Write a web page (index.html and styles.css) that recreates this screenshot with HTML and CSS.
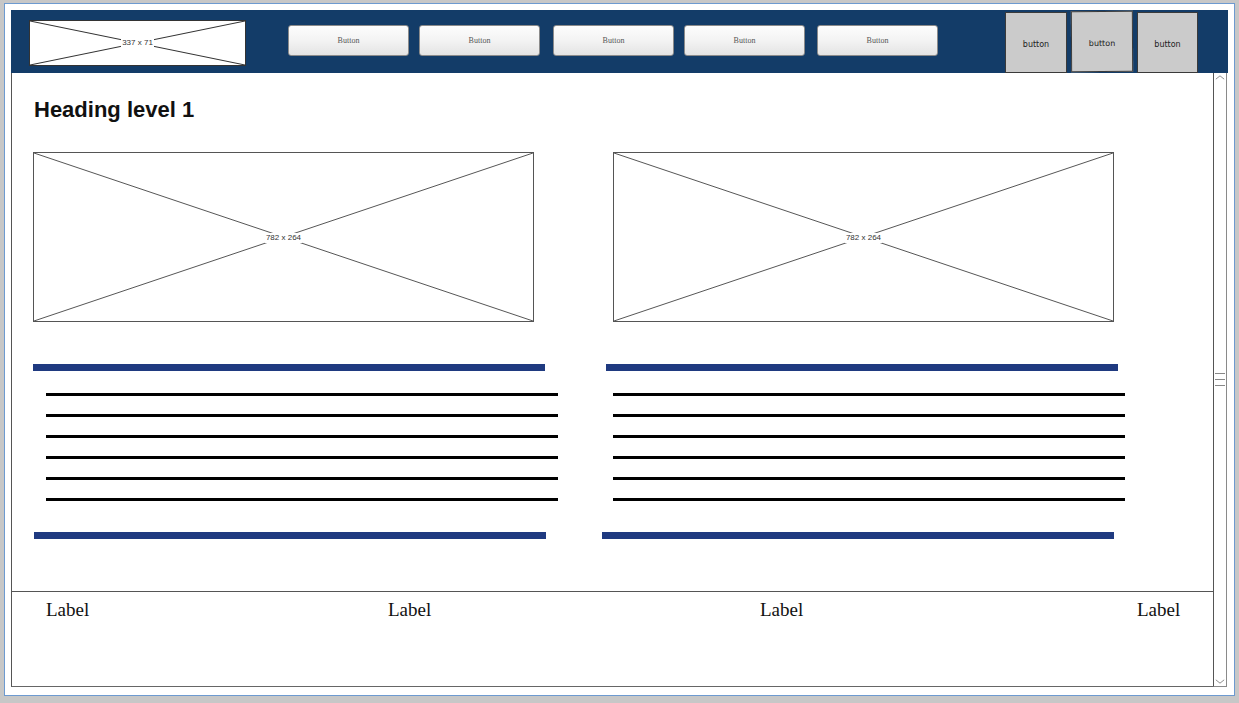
FILE: index.html
```html
<!DOCTYPE html>
<html>
<head>
<meta charset="utf-8">
<link rel="stylesheet" href="styles.css">
</head>
<body>
<div class="window">
  <header class="topbar">
    <div class="ph logo">
      <svg class="xsvg" viewBox="0 0 100 100" preserveAspectRatio="none"><line x1="0" y1="0" x2="100" y2="100"/><line x1="0" y1="100" x2="100" y2="0"/></svg>
      <span class="ph-label">337 x 71</span>
    </div>
    <nav class="navbtns">
      <div class="nbtn">Button</div>
      <div class="nbtn g10">Button</div>
      <div class="nbtn g13">Button</div>
      <div class="nbtn g10">Button</div>
      <div class="nbtn g12">Button</div>
    </nav>
    <div class="sbtns">
      <div class="sbtn r1">button</div>
      <div class="sbtn r2">button</div>
      <div class="sbtn r3">button</div>
    </div>
  </header>
  <div class="main">
    <div class="content">
      <h1 class="heading">Heading level 1</h1>
      <div class="cols">
        <div class="col col1">
          <div class="ph img">
            <svg class="xsvg" viewBox="0 0 100 100" preserveAspectRatio="none"><line x1="0" y1="0" x2="100" y2="100"/><line x1="0" y1="100" x2="100" y2="0"/></svg>
            <span class="ph-label">782 x 264</span>
          </div>
          <div class="bar top"></div>
          <div class="lines">
            <div class="line"></div><div class="line"></div><div class="line"></div>
            <div class="line"></div><div class="line"></div><div class="line"></div>
          </div>
          <div class="bar bottom"></div>
        </div>
        <div class="col col2">
          <div class="ph img">
            <svg class="xsvg" viewBox="0 0 100 100" preserveAspectRatio="none"><line x1="0" y1="0" x2="100" y2="100"/><line x1="0" y1="100" x2="100" y2="0"/></svg>
            <span class="ph-label">782 x 264</span>
          </div>
          <div class="bar top"></div>
          <div class="lines">
            <div class="line"></div><div class="line"></div><div class="line"></div>
            <div class="line"></div><div class="line"></div><div class="line"></div>
          </div>
          <div class="bar bottom"></div>
        </div>
      </div>
      <footer class="footer">
        <span class="label">Label</span>
        <span class="label">Label</span>
        <span class="label">Label</span>
        <span class="label">Label</span>
      </footer>
    </div>
    <div class="scrollbar">
      <svg class="chev" viewBox="0 0 12 6"><polyline points="1,5 6,1 11,5"/></svg>
      <div class="grip"><i></i><i></i><i></i></div>
      <svg class="chev" viewBox="0 0 12 6"><polyline points="1,1 6,5 11,1"/></svg>
    </div>
  </div>
</div>
</body>
</html>
```
FILE: styles.css
```css
* { box-sizing: border-box; }
html, body { margin: 0; padding: 0; }
body {
  background: #c7c7c7;
  width: 1239px;
  height: 703px;
  overflow: hidden;
  font-family: "Liberation Sans", Arial, sans-serif;
}
.window {
  margin: 3px 0 0 4px;
  width: 1231px;
  height: 693px;
  background: #fff;
  border: 1px solid #6d9ad0;
  padding: 6px 6px 8px 6px;
}
.topbar {
  width: 1217px;
  height: 63px;
  background: #133c68;
  display: flex;
  align-items: flex-start;
  padding-left: 18px;
}
.ph {
  position: relative;
  background: #fff;
  border: 1px solid #555;
  display: flex;
  align-items: center;
  justify-content: center;
}
.xsvg {
  position: absolute;
  inset: 0;
  width: 100%;
  height: 100%;
}
.xsvg line {
  stroke: #555;
  stroke-width: 1;
  vector-effect: non-scaling-stroke;
}
.ph-label {
  position: relative;
  background: #fff;
  font-size: 8px;
  color: #333;
  padding: 0 1px;
  line-height: 10px;
}
.img .ph-label { margin-top: 2px; }
.logo {
  margin-top: 10px;
  width: 217px;
  height: 46px;
  border-color: #333;
}
.logo .xsvg line { stroke: #333; }
.navbtns {
  display: flex;
  margin-left: 42px;
  margin-top: 15px;
}
.nbtn {
  width: 121px;
  height: 31px;
  border: 1px solid #8b8b8b;
  border-radius: 3px;
  background: linear-gradient(#fdfdfd, #f3f3f3 50%, #e4e4e4);
  display: flex;
  align-items: center;
  justify-content: center;
  font-family: "Liberation Serif", "Times New Roman", serif;
  font-size: 8px;
  color: #555;
}
.g10 { margin-left: 10px; }
.g12 { margin-left: 12px; }
.g13 { margin-left: 13px; }
.sbtns {
  display: flex;
  margin-left: 67px;
}
.sbtn {
  width: 62px;
  height: 61px;
  background: #cbcbcb;
  border: 1px solid #3a3a3a;
  display: flex;
  align-items: center;
  justify-content: center;
  font-family: "DejaVu Sans", sans-serif;
  font-size: 8px;
  color: #222;
  padding-top: 3px;
}
.r1 { margin-top: 2px; }
.r2 { margin-top: 1px; margin-left: 4px; transform: rotate(-0.3deg); }
.r3 { margin-top: 2px; margin-left: 4px; width: 61px; }
.main {
  display: flex;
  height: 614px;
}
.content {
  width: 1202px;
  height: 614px;
  border-left: 1px solid #555;
  border-bottom: 1px solid #666;
  display: flex;
  flex-direction: column;
}
.heading {
  margin: 0;
  padding: 24px 0 0 22px;
  font-size: 22px;
  line-height: 26px;
  font-weight: bold;
  color: #111;
}
.cols {
  display: flex;
  margin-top: 29px;
  padding-left: 21px;
}
.col {
  display: flex;
  flex-direction: column;
  align-items: flex-start;
}
.col1 { width: 569px; }
.img {
  width: 501px;
  height: 170px;
}
.bar {
  width: 512px;
  height: 7px;
  background: #1f3a80;
}
.bar.top { margin-top: 42px; }
.bar.bottom { margin-top: 31px; }
.lines {
  display: flex;
  flex-direction: column;
  gap: 18px;
  margin-top: 22px;
}
.line {
  width: 512px;
  height: 3px;
  background: #000;
}
.col1 .lines { margin-left: 13px; }
.col1 .bar.bottom { margin-left: 1px; }
.col2 .img { margin-left: 11px; }
.col2 .bar.top { margin-left: 4px; }
.col2 .lines { margin-left: 11px; }
.footer {
  margin-top: auto;
  height: 95px;
  border-top: 1px solid #555;
  display: grid;
  grid-template-columns: 342px 372px 377px auto;
  align-content: start;
  padding: 7px 0 0 34px;
}
.label {
  font-family: "Liberation Serif", "Times New Roman", serif;
  font-size: 19px;
  color: #111;
}
.scrollbar {
  width: 14px;
  height: 614px;
  border-left: 1px solid #555;
  border-right: 1px solid #8a8a8a;
  border-bottom: 1px solid #8a8a8a;
  display: flex;
  flex-direction: column;
  align-items: center;
  justify-content: space-between;
  padding: 2px 0 2px;
}
.chev {
  width: 10px;
  height: 5px;
}
.chev polyline {
  fill: none;
  stroke: #777;
  stroke-width: 1;
}
.grip {
  display: flex;
  flex-direction: column;
  gap: 5px;
}
.grip i {
  display: block;
  width: 10px;
  height: 1px;
  background: #888;
}
```
